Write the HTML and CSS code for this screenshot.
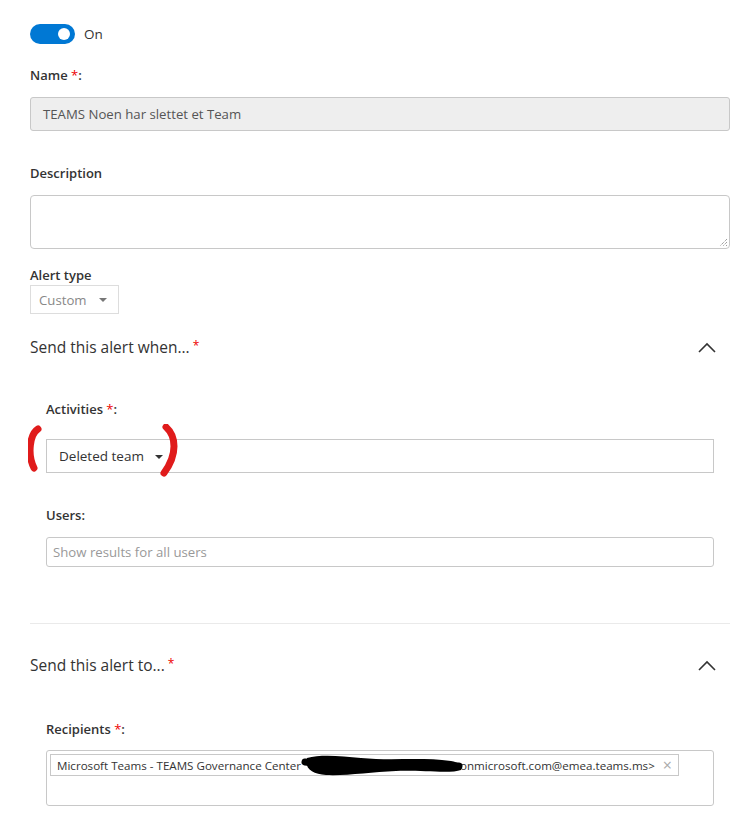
FILE: index.html
```
<!DOCTYPE html>
<html>
<head>
<meta charset="utf-8">
<link rel="stylesheet" href="styles.css">
</head>
<body>
<div class="page">
  <div class="toggle-row">
    <span class="toggle"><span class="knob"></span></span>
    <span class="toggle-text">On</span>
  </div>

  <div class="label l-name">Name <span class="req">*</span>:</div>
  <div class="input disabled">TEAMS Noen har slettet et Team</div>

  <div class="label l-desc">Description</div>
  <div class="textarea">
    <svg class="grip" width="9" height="9" viewBox="0 0 9 9"><path d="M8 1 L1 8 M8 4 L4 8 M8 7 L7 8" stroke="#777" stroke-width="1" stroke-dasharray="1 1" fill="none"/></svg>
  </div>

  <div class="label l-type">Alert type</div>
  <div class="type-drop">Custom <span class="caret light"></span></div>

  <div class="section-head h-when">
    <span>Send this alert when...<span class="req small">*</span></span>
    <svg class="chev" width="18" height="11" viewBox="0 0 18 11"><path d="M1 10 L9 2 L17 10" stroke="#333" stroke-width="1.6" fill="none"/></svg>
  </div>

  <div class="sub">
    <div class="label l-act">Activities <span class="req">*</span>:</div>
    <div class="act-wrap">
      <div class="act-box"><span class="act-drop">Deleted team <span class="caret"></span></span></div>
      <svg class="marks" width="160" height="60" viewBox="0 0 160 60">
        <path d="M10 5 C2 10 -1 30 6 44" stroke="#e01b1b" stroke-width="7" stroke-linecap="round" fill="none"/>
        <path d="M138 3 C148 12 150 30 136 49" stroke="#e01b1b" stroke-width="7" stroke-linecap="round" fill="none"/>
      </svg>
    </div>

    <div class="label l-users">Users:</div>
    <div class="input users">Show results for all users</div>
  </div>

  <div class="divider"></div>

  <div class="section-head h-to">
    <span>Send this alert to...<span class="req small">*</span></span>
    <svg class="chev" width="18" height="11" viewBox="0 0 18 11"><path d="M1 10 L9 2 L17 10" stroke="#333" stroke-width="1.6" fill="none"/></svg>
  </div>

  <div class="sub">
    <div class="label l-rec">Recipients <span class="req">*</span>:</div>
    <div class="rec-box">
      <span class="chip">
        <span>Microsoft Teams - TEAMS Governance Center</span><span class="redact"><svg class="scribble" width="166" height="26" viewBox="0 0 166 26"><path d="M6 6 C20 2 40 4 60 6 C90 9 120 5 150 9 C158 10 162 14 160 18 C150 22 120 18 95 19 C70 20 45 24 25 23 C12 22 3 17 6 6 Z" fill="#000"/><path d="M4 10 C30 14 80 12 158 14" stroke="#000" stroke-width="7" stroke-linecap="round" fill="none"/></svg></span><span>.onmicrosoft.com@emea.teams.ms&gt;</span>
        <span class="x">×</span>
      </span>
    </div>
  </div>
</div>
</body>
</html>
```

FILE: styles.css
```
* { box-sizing: border-box; }
html, body { margin: 0; padding: 0; background: #fff; }
body {
  font-family: "Open Sans", "Noto Sans", "Liberation Sans", sans-serif;
  color: #333;
  font-size: 14px;
}
.page { padding: 24px 15px 0 30px; width: 745px; }

.toggle-row { display: flex; align-items: center; height: 20px; }
.toggle {
  width: 45px; height: 20px; border-radius: 10px; background: #0078d4;
  display: flex; align-items: center; justify-content: flex-end; padding-right: 5px;
}
.knob { width: 12px; height: 12px; border-radius: 50%; background: #fff; }
.toggle-text { margin-left: 9px; font-size: 13.5px; color: #333; }

.label { font-size: 13px; font-weight: 600; line-height: 20px; height: 20px; color: #333; }
.req { color: #e00; font-weight: 400; }
.req.small { font-size: 12px; margin-left: 3px; vertical-align: 3px; }

.l-name { margin-top: 21px; }
.input {
  margin-top: 12px; height: 34px; border: 1px solid #c8c8c8; border-radius: 3px;
  padding: 0 12px; display: flex; align-items: center; font-size: 13.2px;
}
.input.disabled { background: #eee; color: #555; }

.l-desc { margin-top: 32px; }
.textarea {
  margin-top: 12px; height: 54px; border: 1px solid #c8c8c8; border-radius: 4px; position: relative;
}
.grip { position: absolute; right: 1px; bottom: 1px; }

.l-type { margin-top: 16px; }
.type-drop {
  width: 89px; height: 29px; border: 1px solid #ddd; color: #888; font-size: 13.2px;
  display: flex; align-items: center; padding-left: 8px;
}
.caret {
  display: inline-block; width: 0; height: 0; margin-left: 8px;
  border-left: 4px solid transparent; border-right: 4px solid transparent; border-top: 4px solid #333;
  vertical-align: 2px;
}
.caret.light { border-top-color: #777; margin-left: 12px; }

.section-head {
  display: flex; justify-content: space-between; align-items: center;
  height: 24px; font-size: 15.5px; color: #333; padding-right: 14px;
}
.h-when { margin-top: 21px; }
.chev { display: block; }

.sub { padding-left: 16px; padding-right: 16px; }
.l-act { margin-top: 40px; }
.act-wrap { position: relative; margin-top: 20px; }
.act-box {
  height: 34px; border: 1px solid #c8c8c8; display: flex; align-items: center; padding-left: 12px;
}
.act-drop { font-size: 13.5px; color: #333; }
.marks { position: absolute; left: -18px; top: -15px; }

.l-users { margin-top: 32px; }
.input.users { height: 30px; padding: 0 6px; color: #999; font-size: 13.2px; }

.divider { margin-top: 56px; height: 1px; background: #eaeaea; }
.h-to { margin-top: 29px; }

.l-rec { margin-top: 42px; }
.rec-box {
  margin-top: 11px; height: 56px; border: 1px solid #c8c8c8; border-radius: 3px; padding: 3px;
}
.chip {
  display: inline-flex; align-items: center; height: 22px; border: 1px solid #c8c8c8;
  padding: 0 6px; font-size: 11.6px; color: #333; white-space: nowrap;
}
.redact { display: inline-block; width: 156px; height: 18px; position: relative; }
.scribble { position: absolute; left: 0; top: -4px; }
.x { color: #aaa; font-size: 16px; margin-left: 8px; line-height: 16px; }
```
